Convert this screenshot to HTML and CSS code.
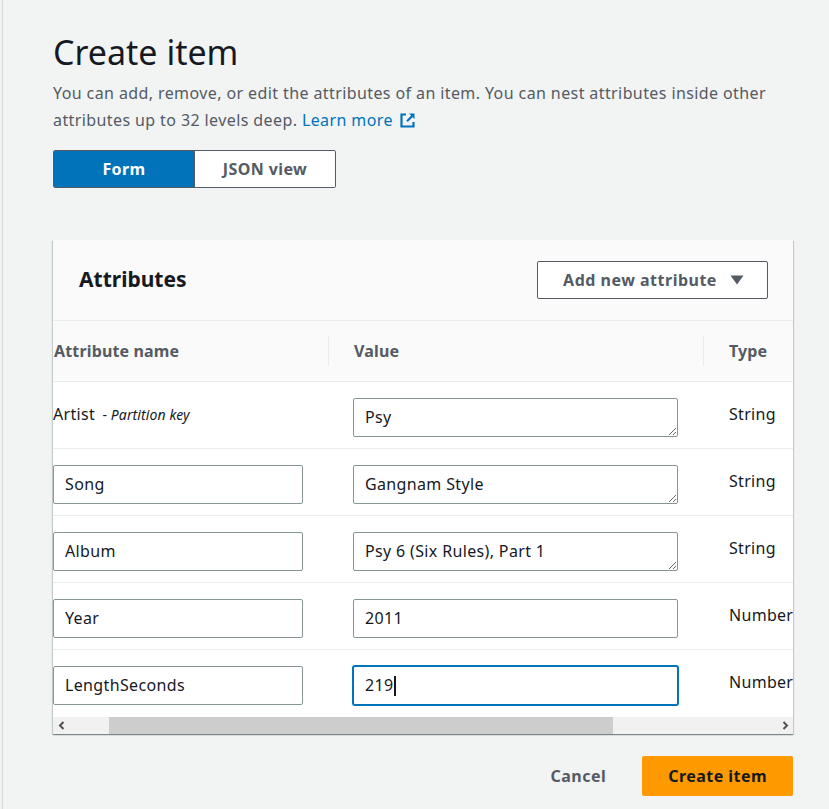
FILE: index.html
```html
<!DOCTYPE html>
<html lang="en">
<head>
<meta charset="utf-8">
<title>Create item</title>
<link rel="stylesheet" href="styles.css">
</head>
<body>
<div class="page">
  <h1 class="title">Create item</h1>
  <p class="desc">You can add, remove, or edit the attributes of an item. You can nest attributes inside other attributes up to 32 levels deep. <a class="link" href="#">Learn more<svg class="ext" width="17" height="17" viewBox="0 0 17 17" aria-hidden="true"><path d="M7 2.5H2.5v12h12V10" fill="none" stroke="#0073bb" stroke-width="2.2"/><path d="M8 9.2L14 3.2" stroke="#0073bb" stroke-width="2.2"/><path d="M10 1.5h5.5V7z" fill="#0073bb"/></svg></a></p>

  <div class="segmented">
    <button class="seg seg-active">Form</button>
    <button class="seg">JSON view</button>
  </div>

  <section class="panel">
    <div class="panel-header">
      <h2 class="panel-title">Attributes</h2>
      <button class="btn-outline">Add new attribute <svg class="caret-down" width="14" height="10" viewBox="0 0 14 10"><path d="M0.5 0.5h13L7 9.5z" fill="#545b64"/></svg></button>
    </div>
    <div class="table-clip">
      <div class="table">
        <div class="row head">
          <div class="cell c1"><span class="th">Attribute name</span></div>
          <div class="cell c2"><span class="th sep">Value</span></div>
          <div class="cell c3"><span class="th sep">Type</span></div>
        </div>
        <div class="row">
          <div class="cell c1 text">Artist <span class="key">- <em>Partition key</em></span></div>
          <div class="cell c2"><textarea class="input value" rows="1">Psy</textarea></div>
          <div class="cell c3 text">String</div>
        </div>
        <div class="row">
          <div class="cell c1"><input class="input name" value="Song"></div>
          <div class="cell c2"><textarea class="input value" rows="1">Gangnam Style</textarea></div>
          <div class="cell c3 text">String</div>
        </div>
        <div class="row">
          <div class="cell c1"><input class="input name" value="Album"></div>
          <div class="cell c2"><textarea class="input value" rows="1">Psy 6 (Six Rules), Part 1</textarea></div>
          <div class="cell c3 text">String</div>
        </div>
        <div class="row">
          <div class="cell c1"><input class="input name" value="Year"></div>
          <div class="cell c2"><input class="input value" value="2011"></div>
          <div class="cell c3 text">Number</div>
        </div>
        <div class="row last">
          <div class="cell c1"><input class="input name" value="LengthSeconds"></div>
          <div class="cell c2"><div class="input value focused">219<span class="cursor"></span></div></div>
          <div class="cell c3 text">Number</div>
        </div>
      </div>
    </div>
    <div class="hscroll">
      <span class="sb-btn"><svg width="8" height="9" viewBox="0 0 8 9"><path d="M5.5 1L2 4.5 5.5 8" fill="none" stroke="#505050" stroke-width="2"/></svg></span>
      <div class="sb-track"><div class="sb-thumb"></div></div>
      <span class="sb-btn"><svg width="8" height="9" viewBox="0 0 8 9"><path d="M2.5 1L6 4.5 2.5 8" fill="none" stroke="#505050" stroke-width="2"/></svg></span>
    </div>
  </section>

  <div class="footer">
    <button class="btn-link">Cancel</button>
    <button class="btn-primary">Create item</button>
  </div>
</div>
</body>
</html>
```
FILE: styles.css
```css
* { box-sizing: border-box; }
html, body { margin: 0; padding: 0; background: #f2f3f3; }
body {
  font-family: "Noto Sans", "Open Sans", Arial, sans-serif;
  color: #16191f;
  font-size: 16px;
}
.page {
  margin-left: 2px;
  border-left: 1px solid #d3d7d7;
  min-height: 809px;
  padding: 32px 0 0 50px;
  width: 793px;
}
.title {
  font-size: 34px;
  line-height: 40px;
  font-weight: 400;
  margin: 0;
  color: #16191f;
}
.desc {
  margin: 8px 0 0;
  font-size: 16px;
  line-height: 27px;
  color: #545b64;
  width: 740px;
  letter-spacing: 0.4px;
}
.link { color: #0073bb; text-decoration: none; }
.ext { vertical-align: -3px; margin-left: 6px; }

.segmented {
  display: flex;
  margin-top: 16px;
  width: 283px;
  height: 38px;
  border: 1px solid #545b64;
  border-radius: 2px;
  overflow: hidden;
}
.seg {
  flex: 1;
  border: 0;
  background: #fff;
  font: 700 16px/36px "Noto Sans", Arial, sans-serif;
  letter-spacing: 0.4px;
  color: #545b64;
  padding: 0;
}
.seg-active {
  background: #0073bb;
  color: #fff;
  border-right: 1px solid #545b64;
}

.panel {
  margin-top: 52px;
  width: 740px;
  background: #fff;
  box-shadow: 0 1px 1px 0 rgba(0,28,36,.3), 1px 1px 1px 0 rgba(0,28,36,.15), -1px 1px 1px 0 rgba(0,28,36,.15);
}
.panel-header {
  height: 81px;
  background: #fafafa;
  border-bottom: 1px solid #eaeded;
  display: flex;
  align-items: center;
  justify-content: space-between;
  padding: 0 25px 0 26px;
}
.panel-title {
  margin: 0;
  font-size: 21px;
  font-weight: 700;
  line-height: 30px;
  margin-top: -2px;
}
.btn-outline {
  width: 231px;
  height: 38px;
  background: #fff;
  border: 1px solid #545b64;
  border-radius: 2px;
  font: 700 16px/22px "Noto Sans", Arial, sans-serif;
  letter-spacing: 0.5px;
  color: #545b64;
  display: flex;
  align-items: center;
  justify-content: center;
  gap: 13px;
  padding: 0 0 0 2px;
}

.table-clip { overflow: hidden; }
.table { width: 1000px; }
.row {
  display: grid;
  grid-template-columns: 275px 375px 350px;
  height: 67px;
  border-bottom: 1px solid #eaeded;
  padding-top: 16px;
}
.row.last { border-bottom: 0; }
.row.head {
  height: 61px;
  padding-top: 0;
  background: #fafafa;
  align-items: center;
}
.th {
  display: block;
  font-weight: 700;
  color: #545b64;
  line-height: 30px;
  height: 30px;
  letter-spacing: 0.15px;
}
.c1 .th { padding-left: 1px; }
.th.sep { border-left: 1px solid #eaeded; padding-left: 25px; }
.c2 { padding-left: 25px; }
.c3 { padding-left: 26px; }
.head .c2, .head .c3 { padding-left: 0; }
.text { padding-top: 5px; line-height: 22px; letter-spacing: 0.3px; }
.key { font-size: 14px; margin-left: 3px; letter-spacing: 0.1px; }

.input {
  display: block;
  height: 39px;
  border: 1px solid #879596;
  border-radius: 2px;
  background: #fff;
  font: 400 16px/22px "Noto Sans", Arial, sans-serif;
  letter-spacing: 0.35px;
  color: #16191f;
  padding: 7px 11px 8px;
  margin: 0;
  outline: none;
}
.input.name { width: 250px; }
.input.value { width: 325px; }
textarea.input { resize: vertical; overflow: hidden; }
.input.focused {
  border-color: #0073bb;
  box-shadow: 0 0 0 1px #0073bb;
}
.cursor {
  display: inline-block;
  width: 2px;
  height: 20px;
  background: #16191f;
  vertical-align: -5px;
}

.hscroll {
  display: flex;
  height: 17px;
  background: #f1f1f1;
}
.sb-btn {
  width: 17px;
  display: flex;
  align-items: center;
  justify-content: center;
}
.sb-track { flex: 1; }
.sb-thumb {
  margin-left: 39px;
  width: 504px;
  height: 17px;
  background: #cdcdcd;
}

.footer {
  width: 740px;
  margin-top: 22px;
  display: flex;
  justify-content: flex-end;
  align-items: center;
  gap: 16px;
}
.btn-link {
  border: 0;
  background: none;
  font: 700 16px/22px "Noto Sans", Arial, sans-serif;
  letter-spacing: 0.5px;
  color: #545b64;
  padding: 9px 20px;
}
.btn-primary {
  height: 40px;
  border: 0;
  border-radius: 2px;
  background: #ff9900;
  font: 700 16px/22px "Noto Sans", Arial, sans-serif;
  letter-spacing: 0.45px;
  color: #16191f;
  padding: 0 26px;
}
```
